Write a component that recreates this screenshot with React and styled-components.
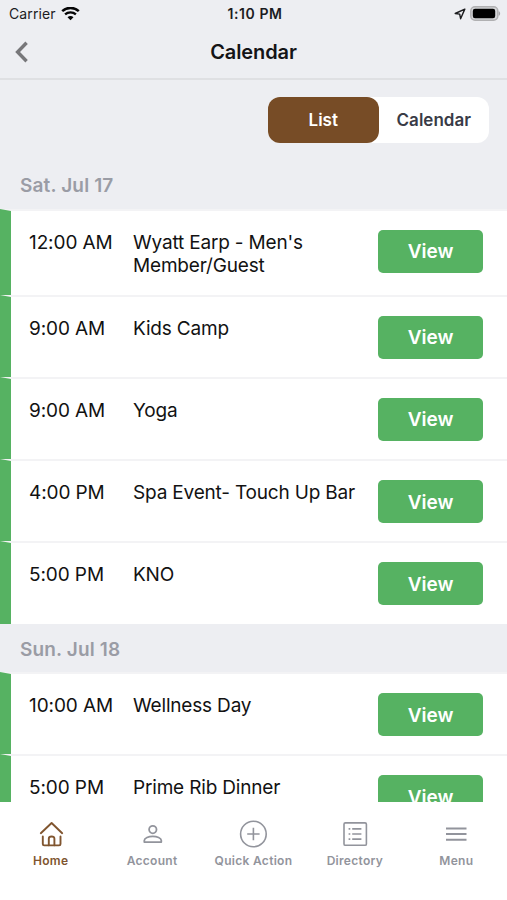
import React, { Component } from 'react';
import styled, { createGlobalStyle } from 'styled-components';

const days = [
  {
    id: 'sat',
    label: 'Sat. Jul 17',
    events: [
      { id: '1', time: '12:00 AM', title: "Wyatt Earp - Men's Member/Guest" },
      { id: '2', time: '9:00 AM', title: 'Kids Camp' },
      { id: '3', time: '9:00 AM', title: 'Yoga' },
      { id: '4', time: '4:00 PM', title: 'Spa Event- Touch Up Bar' },
      { id: '5', time: '5:00 PM', title: 'KNO' },
    ],
  },
  {
    id: 'sun',
    label: 'Sun. Jul 18',
    events: [
      { id: '6', time: '10:00 AM', title: 'Wellness Day' },
      { id: '7', time: '5:00 PM', title: 'Prime Rib Dinner' },
    ],
  },
];

const tabs = [
  { id: 'home', label: 'Home', icon: HomeIcon, active: true },
  { id: 'account', label: 'Account', icon: AccountIcon },
  { id: 'quick', label: 'Quick Action', icon: PlusIcon },
  { id: 'directory', label: 'Directory', icon: DirectoryIcon },
  { id: 'menu', label: 'Menu', icon: MenuIcon },
];

class App extends Component {
  render() {
    return (
      <Screen>
        <GlobalStyle />
        <StatusBar>
          <Carrier>
            Carrier
            <WifiIcon />
          </Carrier>
          <Clock>1:10 PM</Clock>
          <Indicators>
            <LocationIcon />
            <BatteryIcon />
          </Indicators>
        </StatusBar>
        <Header>
          <Back aria-label="Back">
            <BackIcon />
          </Back>
          <Title>Calendar</Title>
        </Header>
        <Toolbar>
          <Switch>
            <Option $active>List</Option>
            <Option>Calendar</Option>
          </Switch>
        </Toolbar>
        <List>
          {days.map(({ id, label, events }) => (
            <Day key={id}>
              <DayLabel>{label}</DayLabel>
              {events.map(({ id: eventId, time, title }) => (
                <Row key={eventId}>
                  <Time>{time}</Time>
                  <Name>{title}</Name>
                  <View>View</View>
                </Row>
              ))}
            </Day>
          ))}
        </List>
        <TabBar>
          {tabs.map(({ id, label, icon: Icon, active }) => (
            <Tab key={id} $active={active}>
              <Icon />
              <TabLabel>{label}</TabLabel>
            </Tab>
          ))}
        </TabBar>
      </Screen>
    );
  }
}

function WifiIcon() {
  return (
    <svg width="19" height="14" viewBox="0 0 19 14" fill="none" stroke="#050506">
      <path d="M1.2 4.2C5.8-.2 13.2-.2 17.8 4.2" strokeWidth="2.5" />
      <path d="M4.1 7.4c3-2.8 7.8-2.8 10.8 0" strokeWidth="2.3" />
      <path d="M9.5 13.2l-3-3c1.7-1.6 4.3-1.6 6 0z" fill="#050506" stroke="none" />
    </svg>
  );
}

function LocationIcon() {
  return (
    <svg width="12" height="12" viewBox="0 0 12 12" fill="none">
      <path
        d="M10.8 1.1L1.2 5.5l4.5.6.9 4.6z"
        stroke="#1b1b1e"
        strokeWidth="1.4"
        strokeLinejoin="round"
      />
    </svg>
  );
}

function BatteryIcon() {
  return (
    <svg width="31" height="15" viewBox="0 0 31 15">
      <rect x="0.8" y="0.8" width="27" height="13.4" rx="4.2" fill="#d5d6d9" stroke="#b0b0b2" strokeWidth="1.5" />
      <rect x="2.8" y="2.8" width="22.4" height="9.4" rx="2.2" fill="#000" />
      <path d="M28.7 5.2c1.9.7 1.9 3.9 0 4.6z" fill="#a5a5a8" />
    </svg>
  );
}

function BackIcon() {
  return (
    <svg width="14" height="22" viewBox="0 0 14 22" fill="none" stroke="#77777a" strokeWidth="3.4">
      <path d="M12.6 1.8L3.6 11l9 9.2" />
    </svg>
  );
}

function HomeIcon() {
  return (
    <svg width="28" height="28" viewBox="0 0 28 28" fill="none" stroke="currentColor" strokeWidth="1.9" strokeLinecap="round" strokeLinejoin="round">
      <path d="M3.8 13.2L14.6 3l10.6 10.2" />
      <path d="M5.8 16.4v7.6q0 1.4 1.4 1.4h14.9q1.4 0 1.4-1.4v-7.6" />
      <path d="M11.8 25.2v-6.4q0-2.3 2.8-2.3t2.8 2.3v6.4" />
    </svg>
  );
}

function AccountIcon() {
  return (
    <svg width="28" height="28" viewBox="0 0 28 28" fill="none" stroke="currentColor" strokeWidth="1.8" strokeLinejoin="round">
      <circle cx="14.8" cy="9.6" r="3.7" />
      <path d="M6.3 22.1v-1.5c0-2.6 4.3-4.2 8.5-4.2s8.5 1.6 8.5 4.2v1.5z" />
    </svg>
  );
}

function PlusIcon() {
  return (
    <svg width="28" height="28" viewBox="0 0 28 28" fill="none" stroke="currentColor" strokeWidth="1.6">
      <circle cx="14.4" cy="14" r="12.8" />
      <path d="M14.4 7.8v12.4M8.2 14h12.4" />
    </svg>
  );
}

function DirectoryIcon() {
  return (
    <svg width="28" height="28" viewBox="0 0 28 28" fill="none" stroke="currentColor" strokeWidth="1.6">
      <rect x="3" y="2.9" width="22.4" height="22.4" rx="1.4" />
      <path d="M11.2 8.9h9.2M11.2 14h9.2M11.2 19.1h9.2" />
      <path d="M7.6 8.9h1.7M7.6 14h1.7M7.6 19.1h1.7" />
    </svg>
  );
}

function MenuIcon() {
  return (
    <svg width="28" height="28" viewBox="0 0 28 28" fill="none" stroke="currentColor" strokeWidth="2">
      <path d="M4 8.4h20.5M4 14.1h20.5M4 19.8h20.5" />
    </svg>
  );
}

const GlobalStyle = createGlobalStyle`
  * {
    box-sizing: border-box;
  }

  body {
    margin: 0;
    font-family: Inter, 'Liberation Sans', sans-serif;
  }

  button {
    border: 0;
    padding: 0;
    font-family: inherit;
  }

  svg {
    display: block;
    flex: none;
  }
`;

const Screen = styled.div`
  width: 507px;
  height: 900px;
  display: flex;
  flex-direction: column;
  overflow: hidden;
  background-color: #edeef2;
`;

const StatusBar = styled.div`
  height: 27px;
  flex: none;
  display: grid;
  grid-template-columns: 1fr auto 1fr;
  align-items: center;
  padding: 0 6px 0 9px;
  color: #1c1c1f;
  font-size: 14px;
`;

const Carrier = styled.div`
  display: flex;
  align-items: center;
  gap: 5px;
  letter-spacing: 0.1px;
`;

const Clock = styled.div`
  font-weight: 600;
  letter-spacing: 0.6px;
`;

const Indicators = styled.div`
  display: flex;
  align-items: center;
  justify-content: flex-end;
  gap: 4px;
`;

const Header = styled.div`
  height: 53px;
  flex: none;
  display: grid;
  grid-template-columns: 60px 1fr 60px;
  align-items: center;
  padding-bottom: 2px;
  border-bottom: 2px solid #dfe0e3;
`;

const Back = styled.button`
  justify-self: start;
  margin-left: 14px;
  background: none;
`;

const Title = styled.div`
  text-align: center;
  color: #141416;
  font-size: 20px;
  font-weight: 600;
  letter-spacing: -0.1px;
`;

const Toolbar = styled.div`
  height: 80px;
  flex: none;
  display: flex;
  justify-content: flex-end;
  padding: 17px 18px 0 0;
`;

const Switch = styled.div`
  width: 221px;
  height: 46px;
  display: flex;
  border-radius: 12px;
  background-color: #fff;
`;

const Option = styled.button`
  flex: 1;
  border-radius: 12px;
  background-color: ${({ $active }) => ($active ? '#774c26' : 'transparent')};
  color: ${({ $active }) => ($active ? '#fff' : '#393b46')};
  font-size: 17px;
  font-weight: 600;
`;

const List = styled.div`
  flex: 1;
  min-height: 0;
  overflow: hidden;
`;

const Day = styled.div``;

const DayLabel = styled.div`
  height: 48.72px;
  padding: 0 20px;
  line-height: 51px;
  color: #9a9ca5;
  font-size: 19px;
  font-weight: 600;
  letter-spacing: 0.15px;
`;

const Row = styled.div`
  min-height: 82.21px;
  display: flex;
  align-items: flex-start;
  padding: 19px 24px 18px 18px;
  border-top: 2px solid #f3f3f5;
  border-left: 11px solid #56b262;
  background-color: #fff;
  color: #121212;
  font-size: 19px;
  line-height: 23px;
`;

const Time = styled.div`
  width: 104px;
  flex: none;
  padding-top: 1px;
  letter-spacing: -0.1px;
`;

const Name = styled.div`
  flex: 1;
  padding: 1px 12px 0 0;
  letter-spacing: -0.18px;
`;

const View = styled.button`
  width: 105px;
  height: 43px;
  flex: none;
  padding-top: 1px;
  border-radius: 5px;
  background-color: #56b262;
  color: #fff;
  font-size: 19px;
  font-weight: 600;
`;

const TabBar = styled.div`
  height: 98px;
  flex: none;
  display: grid;
  grid-template-columns: repeat(5, 1fr);
  background-color: #fff;
`;

const Tab = styled.div`
  display: flex;
  flex-direction: column;
  align-items: center;
  padding-top: 18px;
  color: ${({ $active }) => ($active ? '#80552f' : '#92949c')};
`;

const TabLabel = styled.div`
  margin-top: 5px;
  font-size: 12px;
  font-weight: 600;
  line-height: 16px;
  letter-spacing: 0.3px;
  white-space: nowrap;
`;

export default App;
